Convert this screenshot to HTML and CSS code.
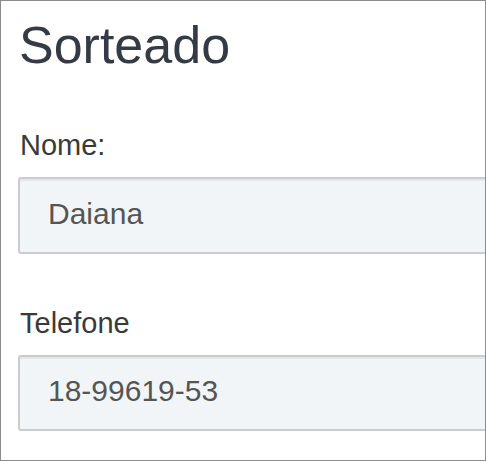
FILE: index.html
```html
<!DOCTYPE html>
<html lang="pt">
<head>
    <meta charset="UTF-8">
    <meta name="viewport" content="width=device-width, initial-scale=1.0">
    <title>Sorteado</title>
    <link rel="stylesheet" href="styles.css">
</head>
<body>
    <div class="panel">
        <h1 class="title">Sorteado</h1>
        <form class="winner-form">
            <div class="form-group">
                <label for="nome">Nome:</label>
                <input type="text" id="nome" class="form-control" value="Daiana" readonly>
            </div>
            <div class="form-group">
                <label for="telefone">Telefone</label>
                <input type="text" id="telefone" class="form-control" value="18-99619-53" readonly>
            </div>
        </form>
    </div>
</body>
</html>
```

FILE: styles.css
```css
body {
    font-family: "Liberation Sans", Arial, sans-serif;
    margin: 0;
    padding: 0;
    background: #fff;
}

.panel {
    box-sizing: border-box;
    width: 486px;
    height: 461px;
    border: 1px solid #8c8c8c;
    padding: 14px 0 0 17px;
    overflow: hidden;
}

.title {
    margin: 0 0 54px 1px;
    font-size: 52px;
    line-height: 60px;
    font-weight: normal;
    color: #353b44;
}

.form-group {
    margin-bottom: 53px;
}

.form-group label {
    display: block;
    padding-left: 2px;
    font-size: 29px;
    line-height: 32px;
    color: #3a3a3a;
    margin-bottom: 16px;
}

.form-control {
    box-sizing: border-box;
    display: block;
    width: 520px;
    height: 77px;
    margin: 0;
    padding: 0 28px 4px;
    font-family: inherit;
    font-size: 30px;
    color: #555;
    background-color: #f2f5f8;
    border: 2px solid #cacccf;
    border-radius: 3px;
    box-shadow: inset 0 2px 1px rgba(0, 0, 0, 0.06);
    outline: none;
}

.form-group:last-child .form-control {
    height: 76px;
}
```
